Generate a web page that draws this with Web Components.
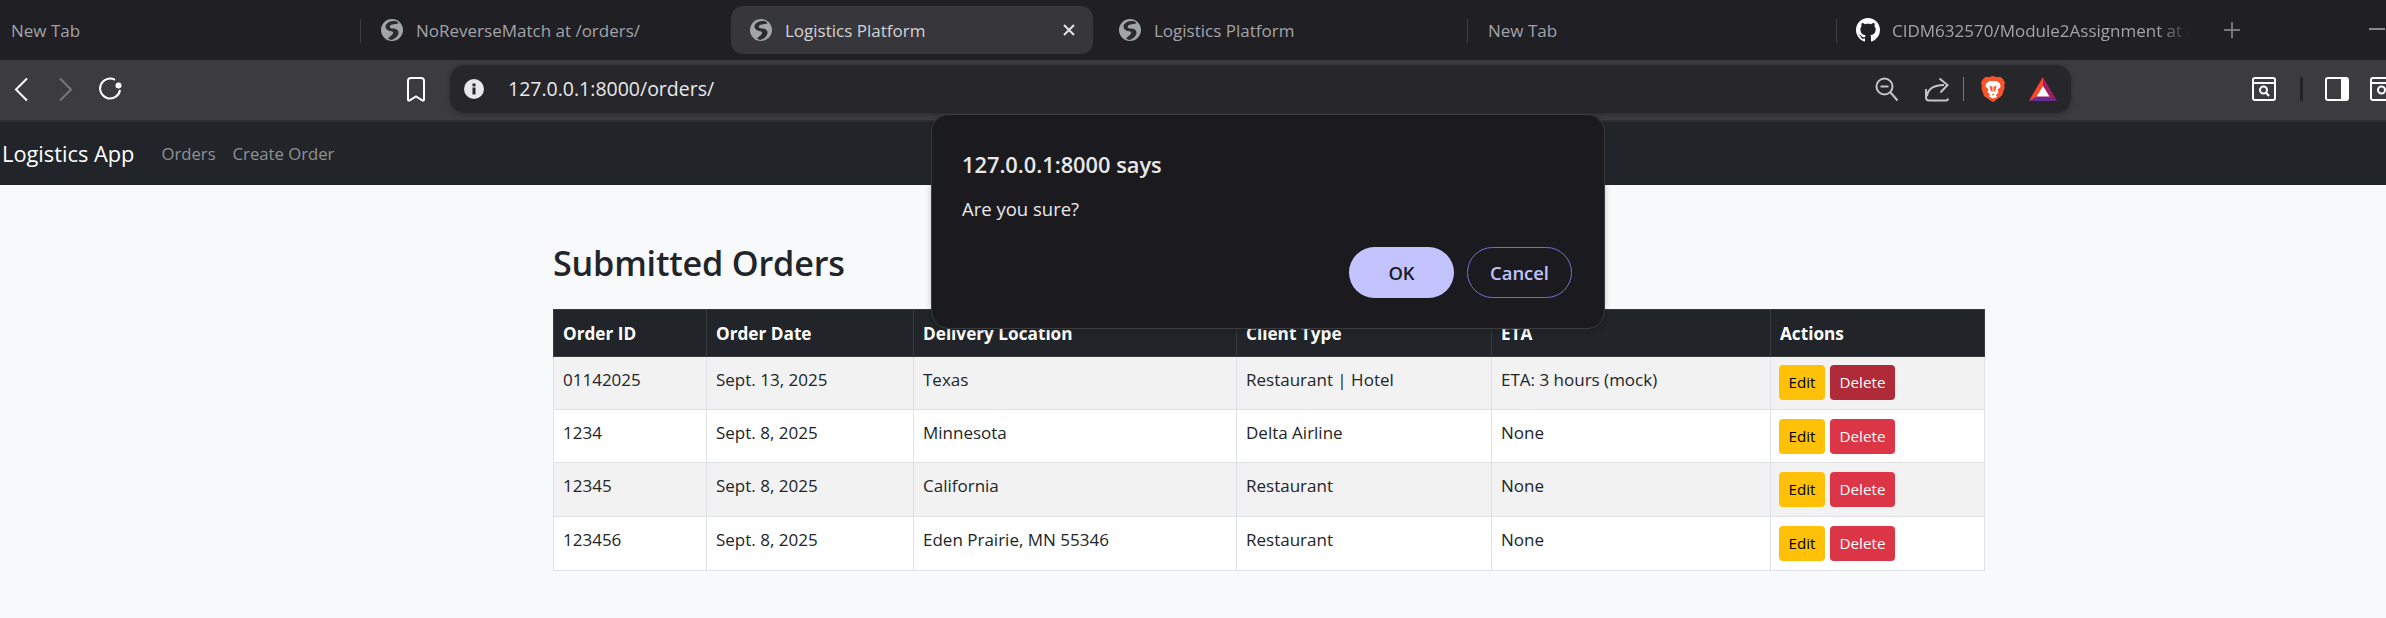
<!DOCTYPE html>
<html><head><meta charset="utf-8"><title>Logistics Platform</title>
<style>
html,body{margin:0;padding:0;background:#f8f9fa;height:100%;overflow:hidden}
body{font-family:"Open Sans","Liberation Sans",sans-serif;position:relative}
</style></head>
<body>
<tab-strip>
  <browser-tab style="width:360px"><span>New Tab</span></browser-tab>
  <browser-tab icon="globe" sep style="width:369px"><span>NoReverseMatch at /orders/</span></browser-tab>
  <browser-tab icon="globe" active style="width:369px"><span>Logistics Platform</span></browser-tab>
  <browser-tab icon="globe" style="width:369px"><span>Logistics Platform</span></browser-tab>
  <browser-tab sep style="width:369px"><span>New Tab</span></browser-tab>
  <browser-tab icon="github" sep fade style="width:369px"><span>CIDM632570/Module2Assignment at main</span></browser-tab>
</tab-strip>
<browser-toolbar></browser-toolbar>
<app-navbar brand="Logistics App">
  <span>Orders</span><span>Create Order</span>
</app-navbar>
<orders-page heading="Submitted Orders"></orders-page>
<confirm-dialog origin="127.0.0.1:8000 says" message="Are you sure?"></confirm-dialog>

<script>
const GLOBE=`<svg viewBox="0 0 22 22" width="22" height="22"><circle cx="11" cy="11" r="11" fill="#a0a5aa"/><path fill="#2c2c30" d="M16 2.500C11 1 6 3 4.500 6.500 4 9 6 11.500 9 12 11.500 12.300 12.500 13 12 14.500 11.500 16 9 17 7 19.500L10 21C13 20.500 17 18 17.500 14 17.800 11 15 9.500 12 9.500 10 9.500 8.500 9 8.800 7.500 9.200 5.500 13 5.200 17.500 4.500Z"/></svg>`;
const GITHUB=`<svg viewBox="0 0 16 16" width="24" height="24"><path fill="#fff" fill-rule="evenodd" d="M8 0C3.58 0 0 3.58 0 8c0 3.54 2.29 6.53 5.47 7.59.4.07.55-.17.55-.38 0-.19-.01-.82-.01-1.49-2.01.37-2.53-.49-2.69-.94-.09-.23-.48-.94-.82-1.13-.28-.15-.68-.52-.01-.53.63-.01 1.08.58 1.23.82.72 1.21 1.87.87 2.33.66.07-.52.28-.87.51-1.07-1.78-.2-3.64-.89-3.64-3.95 0-.87.31-1.59.82-2.15-.08-.2-.36-1.02.08-2.12 0 0 .67-.21 2.2.82.64-.18 1.32-.27 2-.27.68 0 1.36.09 2 .27 1.53-1.04 2.2-.82 2.2-.82.44 1.1.16 1.92.08 2.12.51.56.82 1.27.82 2.15 0 3.07-1.87 3.75-3.65 3.95.29.25.54.73.54 1.48 0 1.07-.01 1.93-.01 2.2 0 .21.15.46.55.38A8.013 8.013 0 0016 8c0-4.42-3.58-8-8-8z"/></svg>`;

function shadow(el,html){el.attachShadow({mode:'open'}).innerHTML=html}

class TabStrip extends HTMLElement{constructor(){super();shadow(this,`<style>
:host{display:flex;height:60px;background:#1f1f24;overflow:hidden;align-items:stretch}
.plus{flex:none;display:flex;align-items:center;justify-content:center;margin-left:17px;width:20px}
.min{flex:none;margin-left:127px;width:16px;height:2px;background:#8a8a8e;align-self:center;margin-top:-3px}
</style><slot></slot>
<div class="plus"><svg width="16" height="16" viewBox="0 0 16 16"><path d="M8 0v16M0 8h16" stroke="#77777b" stroke-width="2"/></svg></div>
<div class="min"></div>`)}}
customElements.define('tab-strip',TabStrip);

class BrowserTab extends HTMLElement{constructor(){super();shadow(this,`<style>
:host{display:block;flex:none;box-sizing:border-box;position:relative;height:60px;font-size:17px;color:#a3a3a7}
.sep{position:absolute;left:0;top:19px;width:1px;height:24px;background:#3c3c41}
.in{display:flex;align-items:center;gap:13px;height:48px;margin-top:6px;padding-left:21px;box-sizing:border-box;white-space:nowrap;overflow:hidden}
:host([active]) .in{background:#36363b;border-radius:12px;margin-left:2px;width:362px;padding-left:19px;color:#d2d2d6}
:host(:not([icon])) .in{padding-left:11px}
:host([sep]:not([icon])) .in{padding-left:21px}
:host([fade]) .in{padding-left:20px;gap:12px;width:358px;-webkit-mask-image:linear-gradient(90deg,#000 322px,transparent 354px);mask-image:linear-gradient(90deg,#000 322px,transparent 354px)}
.x{margin-left:auto;margin-right:18px;flex:none}
svg{flex:none;display:block}
</style><div class="sep" hidden></div><div class="in"><span class="ic"></span><slot></slot></div>`)}
connectedCallback(){const r=this.shadowRoot;
 if(this.hasAttribute('sep'))r.querySelector('.sep').hidden=false;
 const ic=r.querySelector('.ic'),t=this.getAttribute('icon');
 if(t==='globe')ic.outerHTML=GLOBE;else if(t==='github')ic.outerHTML=GITHUB;else ic.remove();
 if(this.hasAttribute('active')){r.querySelector('.in').insertAdjacentHTML('beforeend',`<svg class="x" width="12" height="12" viewBox="0 0 12 12"><path d="M1 1l10 10M11 1L1 11" stroke="#e4e4e8" stroke-width="2"/></svg>`)}
}}
customElements.define('browser-tab',BrowserTab);

class BrowserToolbar extends HTMLElement{constructor(){super();shadow(this,`<style>
:host{display:flex;align-items:center;box-sizing:border-box;height:62px;padding:0 0 2px 14px;background:#3b3b40;border-bottom:2px solid #2f2f33;overflow:hidden;color:#fff}
svg{flex:none;display:block}
.omni{flex:none;box-sizing:border-box;margin-left:23px;width:1621px;height:48px;background:#26262b;border-radius:15px;box-shadow:0 1px 5px rgba(0,0,0,.3);display:flex;align-items:center;padding-left:14px}
.url{margin-left:24px;font-size:19.500px;color:#e9e9ec;margin-top:-1px}
.r{margin-left:auto;display:flex;align-items:center}
.sep1{width:1px;height:24px;background:#77777b;margin:0 17px 0 13px}
.sep2{width:3px;height:24px;background:#232327;border-radius:2px;flex:none}
</style>
<svg width="14" height="25" viewBox="0 0 14 25"><path d="M13 1.500L2 12.500l11 11" fill="none" stroke="#fff" stroke-width="2"/></svg>
<svg style="margin-left:31px" width="14" height="25" viewBox="0 0 14 25"><path d="M1 1.500l11 11-11 11" fill="none" stroke="#77777b" stroke-width="2"/></svg>
<svg style="margin-left:23px" width="28" height="28" viewBox="0 0 28 28"><path d="M19 4.800A10 10 0 1 0 24 15" fill="none" stroke="#fff" stroke-width="2"/><circle cx="22.500" cy="10.500" r="3" fill="#fff"/></svg>
<svg style="margin-left:281px" width="22" height="27" viewBox="0 0 22 27"><path d="M3 5a3 3 0 0 1 3-3h10a3 3 0 0 1 3 3v18.500c0 1-1 1.300-1.700.9L11 20.500l-6.300 3.900c-.7.400-1.700.1-1.700-.9z" fill="none" stroke="#fff" stroke-width="2"/></svg>
<div class="omni">
<svg width="20" height="20" viewBox="0 0 20 20"><circle cx="10" cy="10" r="10" fill="#e8e8ea"/><rect x="8.500" y="8.500" width="3" height="7" fill="#26262b"/><rect x="8.500" y="4.500" width="3" height="2.800" fill="#26262b"/></svg>
<span class="url">127.0.0.1:8000/orders/</span>
<div class="r">
<svg width="28" height="28" viewBox="0 0 28 28"><circle cx="12.500" cy="11.500" r="8" fill="none" stroke="#c4c4c8" stroke-width="2"/><path d="M8.500 11.500h8" stroke="#c4c4c8" stroke-width="2"/><path d="M18.500 17.500l7 8" stroke="#c4c4c8" stroke-width="2"/></svg>
<svg style="margin-left:24px" width="26" height="26" viewBox="0 0 26 26"><path d="M2 13v8.500a3 3 0 0 0 3 3h17a2 2 0 0 0 2-2M3 20c1-7 7-11 17-11" fill="none" stroke="#c4c4c8" stroke-width="2"/><path d="M15.500 2.500l8 6.500-7 7.500" fill="none" stroke="#c4c4c8" stroke-width="2"/></svg>
<div class="sep1"></div>
<svg width="24" height="26" viewBox="0 0 24 26"><path d="M12 0l4.500 1.200 2.500-.4L22 3l2 3.500-.8 3 .4 2.500-2.600 7.500L13 25.500 12 26l-1-.5-8-5.500L.4 12.500.8 10 0 6.500 2 3 5 .8l2.500.4z" fill="#fb542b"/><path d="M5 7.500l3.500-2.500h7L19 7.500l.6 3.500-3 2.500.8 3-2.400 2.500 1 2L12 22.500 8 20.500l1-2-2.400-2.500.8-3-3-2.500z" fill="#fff"/><path d="M8.500 9.500l3 1.500v5l-2-1.500zM15.500 9.500l-3 1.500v5l2-1.500zM10.500 18h3l-1.500 1.500z" fill="#fb542b"/></svg>
<svg style="margin-left:24px;margin-right:14px" width="28" height="24" viewBox="0 0 28 24"><path d="M14 0L0 24h28z" fill="#9e1f63"/><path d="M14 0L0 24l7-4 7-9z" fill="#ff4724"/><path d="M0 24l7-4h14l7 4z" fill="#662d91"/><path d="M14 9l6.500 10.500h-13z" fill="#fff"/></svg>
</div></div>
<svg style="margin-left:180px" width="26" height="24" viewBox="0 0 26 24"><rect x="2" y="1" width="22" height="22" rx="2" fill="none" stroke="#fff" stroke-width="2"/><path d="M2 6h22" stroke="#fff" stroke-width="2"/><circle cx="12.500" cy="13" r="3.500" fill="none" stroke="#fff" stroke-width="2"/><path d="M15 15.500l3 3.500" stroke="#fff" stroke-width="2"/></svg>
<div class="sep2" style="margin-left:23px"></div>
<svg style="margin-left:21px" width="26" height="24" viewBox="0 0 26 24"><rect x="2" y="1" width="22" height="22" rx="2" fill="none" stroke="#fff" stroke-width="2"/><rect x="17" y="1" width="7" height="22" fill="#fff"/></svg>
<svg style="margin-left:19px" width="26" height="24" viewBox="0 0 26 24"><rect x="2" y="1" width="22" height="22" rx="2" fill="none" stroke="#fff" stroke-width="2"/><path d="M2 6h22" stroke="#fff" stroke-width="2"/><circle cx="12.500" cy="13" r="3.500" fill="none" stroke="#fff" stroke-width="2"/></svg>
`)}}
customElements.define('browser-toolbar',BrowserToolbar);

class AppNavbar extends HTMLElement{constructor(){super();shadow(this,`<style>
:host{display:flex;align-items:center;box-sizing:border-box;height:63px;padding:0 0 0 2px;background:#212529}
.b{font-size:21.8px;color:#fff;margin-right:27px}
.l{display:flex;gap:17px;font-size:16.700px;color:#8f9193}
</style><span class="b"></span><div class="l"><slot></slot></div>`)}
connectedCallback(){this.shadowRoot.querySelector('.b').textContent=this.getAttribute('brand')}}
customElements.define('app-navbar',AppNavbar);

class ActionBtn extends HTMLElement{constructor(){super();shadow(this,`<style>
:host{display:inline-flex;align-items:center;justify-content:center;box-sizing:border-box;height:35px;border-radius:4px;font-size:15.2px}
:host([kind=edit]){width:46px;background:#ffc107;color:#000}
:host([kind=del]){width:65px;background:#dc3545;color:#fff}
:host([dark]){background:#b02a37}
</style><slot></slot>`)}}
customElements.define('action-btn',ActionBtn);

const ROWS=[['01142025','Sept. 13, 2025','Texas','Restaurant | Hotel','ETA: 3 hours (mock)',53,9,1],
['1234','Sept. 8, 2025','Minnesota','Delta Airline','None',53,10,0],
['12345','Sept. 8, 2025','California','Restaurant','None',54,10,0],
['123456','Sept. 8, 2025','Eden Prairie, MN 55346','Restaurant','None',54,10,0]];

class OrdersPage extends HTMLElement{constructor(){super();
const rows=ROWS.map(r=>`<tr style="height:${r[5]}px">${r.slice(0,5).map(c=>`<td>${c}</td>`).join('')}<td class="a" style="padding-top:${r[6]-1}px"><div class="acts"><action-btn kind="edit">Edit</action-btn><action-btn kind="del" ${r[7]?'dark':''}>Delete</action-btn></div></td></tr>`).join('');
shadow(this,`<style>
:host{display:block;padding:0 0 0 553px;color:#212529}
h2{margin:0;font-size:34.2px;font-weight:600;line-height:40px;padding-top:58px;height:66px;box-sizing:content-box;letter-spacing:-.2px}
table{border-collapse:collapse;table-layout:fixed;width:1431px;font-size:17px}
th{background:#212529;color:#fff;text-align:left;font-weight:700;height:46px;padding:0 9px;border:1px solid #373b3e;font-size:17.2px}
td{vertical-align:top;padding:10px 9px 0;line-height:25px;border:1px solid #dee2e6;background:#fff;box-sizing:border-box;white-space:nowrap}
td.a{padding-left:8px}
tbody tr:nth-child(odd) td{background:#f2f2f2}
.acts{display:flex;gap:5px}
</style>
<h2></h2>
<table><colgroup><col style="width:153px"><col style="width:207px"><col style="width:323px"><col style="width:255px"><col style="width:279px"><col style="width:214px"></colgroup>
<thead><tr><th>Order ID</th><th>Order Date</th><th>Delivery Location</th><th>Client Type</th><th>ETA</th><th>Actions</th></tr></thead>
<tbody>${rows}</tbody></table>`)}
connectedCallback(){this.shadowRoot.querySelector('h2').textContent=this.getAttribute('heading')}}
customElements.define('orders-page',OrdersPage);

class ConfirmDialog extends HTMLElement{constructor(){super();shadow(this,`<style>
:host{position:absolute;left:931px;top:114px;width:674px;height:215px;box-sizing:border-box;background:#1b1b1f;border:1px solid #3a3a3f;border-radius:18px;padding:36px 32px 0 30px;color:#e8e8ea;box-shadow:0 2px 6px rgba(0,0,0,.2);display:flex;flex-direction:column}
.t{font-size:21.800px;font-weight:600;line-height:28px}
.m{font-size:18.500px;line-height:24px;margin-top:18px}
.b{margin-top:auto;margin-bottom:30px;display:flex;justify-content:flex-end;gap:13px}
.btn{box-sizing:border-box;width:105px;height:51px;border-radius:26px;display:flex;align-items:center;justify-content:center;font-size:18.4px;font-weight:600}
.ok{background:#c2c3ff;color:#1b1b1f}
.c{border:1px solid #6e6fdc;color:#c2c3ff}
</style><div class="t"></div><div class="m"></div><div class="b"><div class="btn ok">OK</div><div class="btn c">Cancel</div></div>`)}
connectedCallback(){const r=this.shadowRoot;r.querySelector('.t').textContent=this.getAttribute('origin');r.querySelector('.m').textContent=this.getAttribute('message')}}
customElements.define('confirm-dialog',ConfirmDialog);
</script>
</body></html>
